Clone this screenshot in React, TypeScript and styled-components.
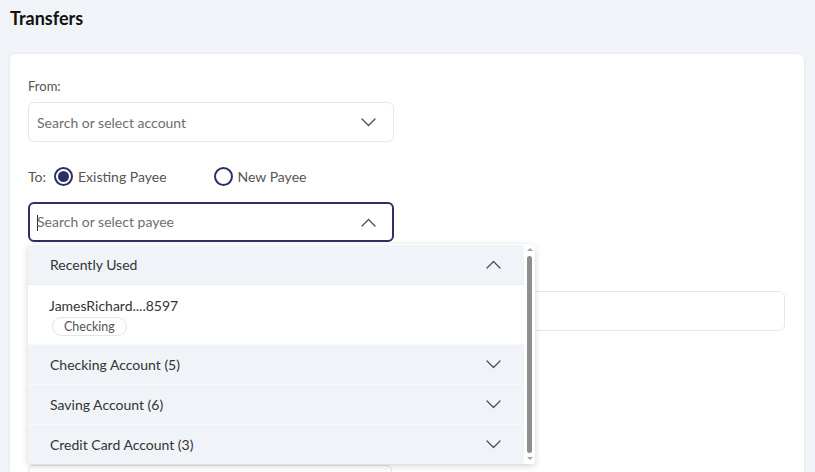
import React from "react";
import styled, { createGlobalStyle } from "styled-components";

const GlobalStyle = createGlobalStyle`
  html, body {
    margin: 0;
    padding: 0;
    background: #f0f3f7;
    font-family: Lato, "Noto Sans", "Liberation Sans", sans-serif;
    color: #333;
    overflow: hidden;
  }
  * { box-sizing: border-box; }
`;

const Page = styled.div`
  height: 472px;
  padding: 7px 11px 0 10px;
  display: flex;
  flex-direction: column;
  overflow: hidden;
`;

const Title = styled.h1`
  margin: 0;
  font-size: 18px;
  line-height: 22px;
  font-weight: 700;
  color: #111;
`;

const Card = styled.div`
  margin-top: 25px;
  flex: 1;
  min-height: 0;
  background: #fff;
  border-radius: 6px 6px 0 0;
  box-shadow: 0 0 3px rgba(30, 40, 70, 0.08);
  padding: 23px 19px 0 18px;
  display: flex;
  flex-direction: column;
`;

const Label = styled.div`
  font-size: 13px;
  line-height: 18px;
  color: #555;
`;

const Field = styled.div<{ $width?: string; $mt?: number }>`
  position: relative;
  flex-shrink: 0;
  width: ${(p) => p.$width || "100%"};
  margin-top: ${(p) => p.$mt ?? 0}px;
`;

const Input = styled.div<{ $focused?: boolean }>`
  height: 40px;
  border-radius: 6px;
  border: ${(p) => (p.$focused ? "2px solid #2d3063" : "1px solid #e4e7eb")};
  background: #fff;
  display: flex;
  align-items: center;
  padding: 0 ${(p) => (p.$focused ? 16 : 17)}px 0 ${(p) => (p.$focused ? 7 : 8)}px;
  font-size: 14px;
  color: #6e6e6e;
`;

const Placeholder = styled.span`
  flex: 1;
`;

const Caret = styled.span`
  display: inline-block;
  width: 1px;
  height: 16px;
  background: #333;
  vertical-align: middle;
  margin-right: -1px;
`;

const RadioRow = styled.div`
  margin-top: 24px;
  display: flex;
  align-items: center;
  font-size: 14px;
  color: #555;
  height: 20px;
  flex-shrink: 0;
`;

const RadioOption = styled.label<{ $gap: number }>`
  display: flex;
  align-items: center;
  gap: 5px;
  margin-left: ${(p) => p.$gap}px;
`;

const RadioCircle = styled.span<{ $checked?: boolean }>`
  width: 19px;
  height: 19px;
  border-radius: 50%;
  border: 2px solid #2d3063;
  display: flex;
  align-items: center;
  justify-content: center;
  &::after {
    content: "";
    display: ${(p) => (p.$checked ? "block" : "none")};
    width: 11px;
    height: 11px;
    border-radius: 50%;
    background: #2d3063;
  }
`;

const Dropdown = styled.div`
  position: absolute;
  top: calc(100% + 2px);
  left: 0;
  width: 507px;
  height: 220px;
  background: #fff;
  border-radius: 3px 6px 4px 4px;
  box-shadow: 0 2px 7px rgba(0, 0, 0, 0.18);
  display: flex;
  overflow: hidden;
  z-index: 5;
`;

const List = styled.div`
  flex: 1;
  display: flex;
  flex-direction: column;
  padding-top: 1px;
`;

const GroupHeader = styled.div<{ $first?: boolean }>`
  height: ${(p) => (p.$first ? 39 : 40)}px;
  background: #f0f3f7;
  border-top: ${(p) => (p.$first ? "none" : "1px solid #f9fafc")};
  display: flex;
  align-items: center;
  justify-content: space-between;
  padding: 0 23px 0 22px;
  font-size: 14px;
  color: #333;
`;

const Item = styled.div`
  height: 60px;
  padding: 12px 21px 0;
  background: #fff;
  border-top: 1px solid #e9ecf0;
`;

const ItemName = styled.div`
  font-size: 14px;
  line-height: 18px;
  color: #333;
`;

const Badge = styled.span`
  display: inline-flex;
  align-items: center;
  height: 19px;
  margin: 2px 0 0 3px;
  padding: 0 11px;
  border: 1px solid #e3e3e3;
  border-radius: 10px;
  font-size: 12.5px;
  color: #555;
`;

const ScrollTrack = styled.div`
  width: 11px;
  background: #fff;
  display: flex;
  flex-direction: column;
  align-items: center;
  padding: 4px 0 4px;
`;

const ScrollArrow = styled.span<{ $down?: boolean }>`
  width: 0;
  height: 0;
  border-left: 3px solid transparent;
  border-right: 3px solid transparent;
  ${(p) =>
    p.$down ? "border-top: 3px solid #a3a3a3;" : "border-bottom: 3px solid #a3a3a3;"}
`;

const ScrollThumb = styled.div`
  flex: 1;
  width: 5px;
  margin: 5px 0 4px;
  border-radius: 3px;
  background: #8e8e8e;
`;

const Chevron = ({ up }: { up?: boolean }) => (
  <svg width="15" height="9" viewBox="0 0 15 9" fill="none">
    <path
      d={up ? "M1 8L7.5 1.5L14 8" : "M1 1L7.5 7.5L14 1"}
      stroke="#474b66"
      strokeWidth="1.3"
      strokeLinecap="round"
      strokeLinejoin="round"
    />
  </svg>
);

const groups = ["Checking Account (5)", "Saving Account (6)", "Credit Card Account (3)"];

export default function App() {
  return (
    <>
      <GlobalStyle />
      <Page>
        <Title>Transfers</Title>
        <Card>
          <Label>From:</Label>
          <Field $width="366px" $mt={7}>
            <Input>
              <Placeholder>Search or select account</Placeholder>
              <Chevron />
            </Input>
          </Field>

          <RadioRow>
            <span>To:</span>
            <RadioOption $gap={8}>
              <RadioCircle $checked />
              Existing Payee
            </RadioOption>
            <RadioOption $gap={47}>
              <RadioCircle />
              New Payee
            </RadioOption>
          </RadioRow>

          <Field $width="366px" $mt={16}>
            <Input $focused>
              <Placeholder>
                <Caret />
                Search or select payee
              </Placeholder>
              <Chevron up />
            </Input>
            <Dropdown>
              <List>
                <GroupHeader $first>
                  Recently Used
                  <Chevron up />
                </GroupHeader>
                <Item>
                  <ItemName>JamesRichard....8597</ItemName>
                  <Badge>Checking</Badge>
                </Item>
                {groups.map((g) => (
                  <GroupHeader key={g}>
                    {g}
                    <Chevron />
                  </GroupHeader>
                ))}
              </List>
              <ScrollTrack>
                <ScrollArrow />
                <ScrollThumb />
                <ScrollArrow $down />
              </ScrollTrack>
            </Dropdown>
          </Field>

          <Field $mt={49}>
            <Input />
          </Field>

          <Field $width="364px" $mt={134}>
            <Input />
          </Field>
        </Card>
      </Page>
    </>
  );
}
